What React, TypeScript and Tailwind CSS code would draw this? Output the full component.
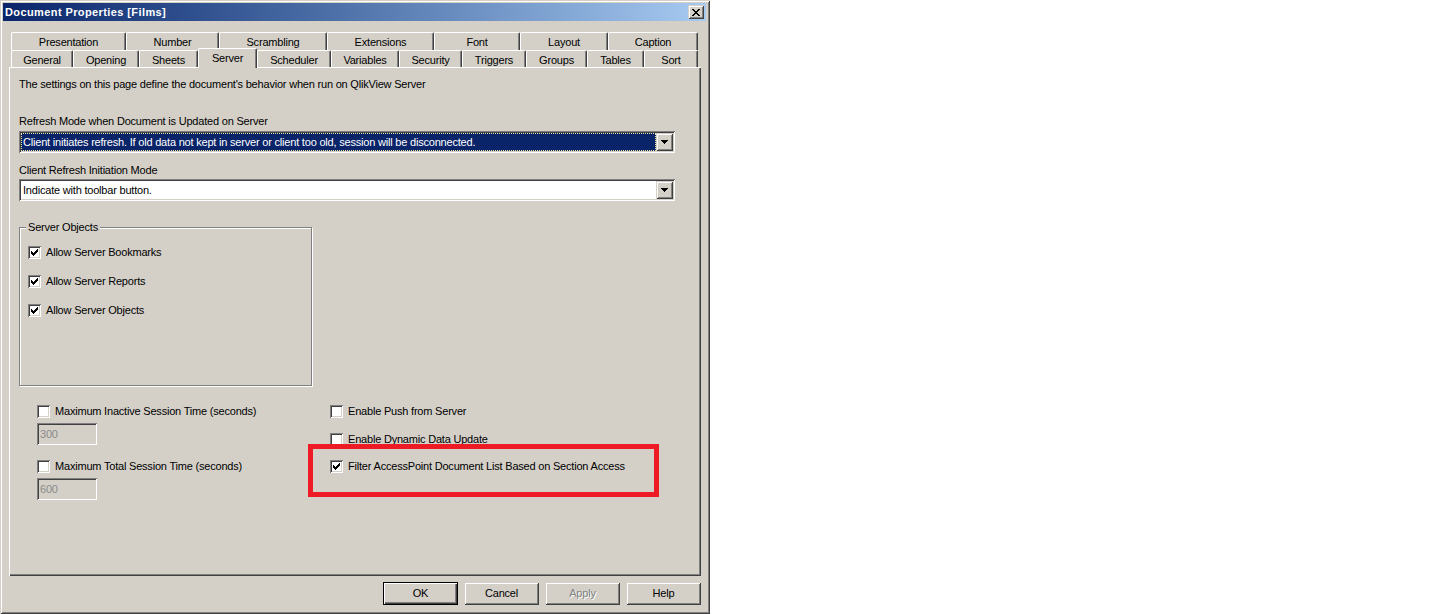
import React from "react";

const RAISED =
  "shadow-[inset_1px_1px_0_#d4d0c8,inset_-1px_-1px_0_#404040,inset_2px_2px_0_#ffffff,inset_-2px_-2px_0_#808080]";
const SUNKEN =
  "shadow-[inset_1px_1px_0_#808080,inset_-1px_-1px_0_#ffffff,inset_2px_2px_0_#404040,inset_-2px_-2px_0_#d4d0c8]";

const row1: [string, string][] = [
  ["Presentation", "w-[115px]"],
  ["Number", "w-[93px]"],
  ["Scrambling", "w-[108px]"],
  ["Extensions", "w-[107px]"],
  ["Font", "w-[86px]"],
  ["Layout", "w-[88px]"],
  ["Caption", "w-[90px]"],
];

const row2: [string, string][] = [
  ["General", "w-[62px]"],
  ["Opening", "w-[66px]"],
  ["Sheets", "w-[59px]"],
  ["Server", "w-[59px]"],
  ["Scheduler", "w-[74px]"],
  ["Variables", "w-[68px]"],
  ["Security", "w-[63px]"],
  ["Triggers", "w-[64px]"],
  ["Groups", "w-[61px]"],
  ["Tables", "w-[57px]"],
  ["Sort", "w-[54px]"],
];

function Tab({ label, w, selected }: { label: string; w: string; selected?: boolean }) {
  if (selected) {
    return (
      <div
        className={`${w} h-[20px] mb-[-1px] relative z-10 bg-[#d4d0c8] flex items-start justify-center pt-[3px] border-l border-t border-white border-r border-r-[#404040] rounded-tl-[2px] rounded-tr-[2px] shadow-[inset_-1px_0_0_#808080]`}
      >
        {label}
      </div>
    );
  }
  return (
    <div
      className={`${w} h-full bg-[#d4d0c8] flex items-center justify-center pt-[2px] border-l border-t border-white border-r border-r-[#404040] rounded-tl-[2px] rounded-tr-[2px] shadow-[inset_-1px_0_0_#808080]`}
    >
      {label}
    </div>
  );
}

function CheckMark() {
  return (
    <svg width="13" height="13" viewBox="0 0 13 13" shapeRendering="crispEdges" className="block">
      <path
        fill="#000"
        d="M9 3h1v1h-1z M8 4h2v1h-2z M3 5h1v1h-1z M7 5h3v1h-3z M3 6h2v1h-2z M6 6h3v1h-3z M3 7h5v1h-5z M4 8h3v1h-3z M5 9h1v1h-1z"
      />
    </svg>
  );
}

function Box({ checked }: { checked?: boolean }) {
  return (
    <span className={`block w-[13px] h-[13px] shrink-0 bg-white ${SUNKEN}`}>
      {checked && <CheckMark />}
    </span>
  );
}

function CheckRow({ label, checked, className = "" }: { label: string; checked?: boolean; className?: string }) {
  return (
    <div className={`flex items-center gap-[5px] h-[13px] ${className}`}>
      <Box checked={checked} />
      <span className="whitespace-nowrap">{label}</span>
    </div>
  );
}

function Arrow() {
  return (
    <svg width="7" height="4" viewBox="0 0 7 4" shapeRendering="crispEdges" className="block">
      <path fill="#000" d="M0 0h7v1h-7z M1 1h5v1h-5z M2 2h3v1h-3z M3 3h1v1h-1z" />
    </svg>
  );
}

function Combo({ text, selected }: { text: string; selected?: boolean }) {
  return (
    <div className={`w-[656px] h-[22px] flex items-stretch p-[2px] bg-white ${SUNKEN}`}>
      <div
        className={`flex-1 flex items-center pl-[2px] whitespace-nowrap overflow-hidden ${
          selected
            ? "bg-[#0a246a] text-white outline-1 outline-dotted outline-[#f0e8a0] -outline-offset-1"
            : "text-black"
        }`}
      >
        {text}
      </div>
      <div className={`w-[17px] h-[18px] flex items-center justify-center bg-[#d4d0c8] ${RAISED}`}>
        <Arrow />
      </div>
    </div>
  );
}

function Field({ value }: { value: string }) {
  return (
    <div className={`w-[60px] h-[22px] flex items-center pl-[3px] bg-[#d4d0c8] text-[#8a8a8a] ${SUNKEN}`}>
      {value}
    </div>
  );
}

function Button({ label, isDefault, disabled }: { label: string; isDefault?: boolean; disabled?: boolean }) {
  if (isDefault) {
    return (
      <div className="w-[75px] h-[23px] border border-black">
        <div className="w-full h-full flex items-center justify-center bg-[#d4d0c8] shadow-[inset_1px_1px_0_#ffffff,inset_-1px_-1px_0_#404040,inset_-2px_-2px_0_#808080]">
          {label}
        </div>
      </div>
    );
  }
  return (
    <div
      className={`w-[75px] h-[23px] flex items-center justify-center bg-[#d4d0c8] ${RAISED} ${
        disabled ? "text-[#808080] [text-shadow:1px_1px_0_#ffffff]" : ""
      }`}
    >
      {label}
    </div>
  );
}

function CloseX() {
  return (
    <svg width="8" height="7" viewBox="0 0 8 7" shapeRendering="crispEdges" className="block">
      <path
        fill="#000"
        d="M0 0h2v1h-2z M6 0h2v1h-2z M1 1h2v1h-2z M5 1h2v1h-2z M2 2h4v1h-4z M3 3h2v1h-2z M2 4h4v1h-4z M1 5h2v1h-2z M5 5h2v1h-2z M0 6h2v1h-2z M6 6h2v1h-2z"
      />
    </svg>
  );
}

export default function App() {
  return (
    <div className="w-[1437px] h-[614px] bg-white flex font-['Liberation_Sans',Arial,sans-serif] text-[11px] leading-[13px] tracking-[-0.2px] text-black overflow-hidden">
      <div className="relative w-[710px] h-[614px] shrink-0 bg-[#d4d0c8] flex flex-col shadow-[inset_1px_1px_0_#d4d0c8,inset_-1px_-1px_0_#404040,inset_2px_2px_0_#ffffff,inset_-2px_-2px_0_#808080]">
        {/* Title bar */}
        <div className="ml-[3px] mt-[3px] w-[703px] h-[18px] flex items-center justify-between pl-[2px] pr-[2px] bg-gradient-to-r from-[#0a246a] to-[#a6caf0]">
          <span className="text-white font-bold tracking-[0.4px] whitespace-nowrap">Document Properties [Films]</span>
          <div className={`w-[16px] h-[14px] flex items-center justify-center bg-[#d4d0c8] ${RAISED}`}>
            <CloseX />
          </div>
        </div>

        {/* Tabs */}
        <div className="flex ml-[11px] mt-[11px] h-[18px]">
          {row1.map(([l, w]) => (
            <Tab key={l} label={l} w={w} />
          ))}
        </div>
        <div className="flex items-end ml-[11px] h-[17px] relative z-10">
          {row2.map(([l, w]) => (
            <Tab key={l} label={l} w={w} selected={l === "Server"} />
          ))}
        </div>

        {/* Panel */}
        <div className="ml-[9px] w-[692px] h-[509px] flex flex-col pl-[10px] pt-[11px] shadow-[inset_1px_1px_0_#ffffff,inset_-1px_-1px_0_#404040,inset_-2px_-2px_0_#808080]">
          <div className="whitespace-nowrap">
            The settings on this page define the document's behavior when run on QlikView Server
          </div>
          <div className="mt-[24px] whitespace-nowrap">Refresh Mode when Document is Updated on Server</div>
          <div className="mt-[3px]">
            <Combo
              selected
              text="Client initiates refresh. If old data not kept in server or client too old, session will be disconnected."
            />
          </div>
          <div className="mt-[11px] whitespace-nowrap">Client Refresh Initiation Mode</div>
          <div className="mt-[2px]">
            <Combo text="Indicate with toolbar button." />
          </div>

          <fieldset className="mt-[20px] w-[293px] h-[165px] border border-[#808080] pl-[8px] pt-[12px] shadow-[inset_1px_1px_0_#ffffff,1px_1px_0_#ffffff] flex flex-col gap-[16px]">
            <legend className="ml-[-2px] px-[2px] bg-[#d4d0c8]">Server Objects</legend>
            <CheckRow label="Allow Server Bookmarks" checked />
            <CheckRow label="Allow Server Reports" checked />
            <CheckRow label="Allow Server Objects" checked />
          </fieldset>

          <div className="flex mt-[19px] ml-[18px]">
            <div className="w-[293px] flex flex-col">
              <CheckRow label="Maximum Inactive Session Time (seconds)" />
              <div className="mt-[5px]">
                <Field value="300" />
              </div>
              <CheckRow className="mt-[15px]" label="Maximum Total Session Time (seconds)" />
              <div className="mt-[5px]">
                <Field value="600" />
              </div>
            </div>
            <div className="flex flex-col">
              <CheckRow label="Enable Push from Server" />
              <CheckRow className="mt-[15px]" label="Enable Dynamic Data Update" />
              <CheckRow className="mt-[14px]" label="Filter AccessPoint Document List Based on Section Access" checked />
            </div>
          </div>
        </div>

        {/* Buttons */}
        <div className="flex ml-[383px] mt-[6px] gap-[6px]">
          <Button label="OK" isDefault />
          <Button label="Cancel" />
          <Button label="Apply" disabled />
          <Button label="Help" />
        </div>

        {/* Red annotation */}
        <div className="absolute left-[308px] top-[444px] w-[351px] h-[53px] border-[5px] border-[#ed1c24]" />
      </div>
    </div>
  );
}
